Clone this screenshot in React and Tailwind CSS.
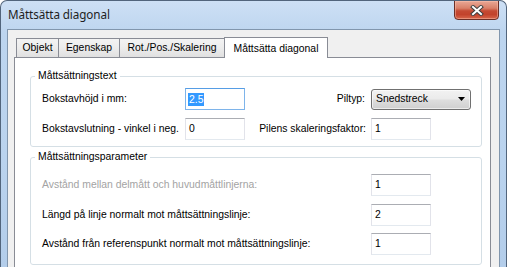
import React from "react";

function Box({ children, focused, w = "w-[60px]" }) {
  return (
    <div
      className={
        w +
        " h-[22px] bg-white flex items-center pl-[2px] border " +
        (focused
          ? "border-[#7eb4ea] border-t-[#569de5]"
          : "border-[#e2e3ea] border-t-[#abadb3] border-b-[#e3e9ef]")
      }
    >
      {children}
    </div>
  );
}

function Select() {
  return (
    <div className="w-[100px] h-[21px] rounded-[3px] border border-[#707070] bg-[linear-gradient(#f2f2f2,#ebebeb_45%,#dddddd_55%,#cfcfcf)] flex items-center pl-[4px] pr-[5px] shadow-[inset_0_0_0_1px_rgba(255,255,255,0.6)]">
      <span className="flex-1 text-black">Snedstreck</span>
      <svg width="7" height="4" viewBox="0 0 7 4">
        <path d="M0 0 H7 L3.5 4 Z" fill="#000" />
      </svg>
    </div>
  );
}

function Group({ title, children, className = "" }) {
  return (
    <fieldset className={"border border-[#d5dfe5] rounded-[3px] " + className}>
      <legend className="ml-[4px] px-[3px] leading-[14px] text-black">{title}</legend>
      {children}
    </fieldset>
  );
}

export default function App() {
  return (
    <div className="w-[507px] h-[267px] overflow-hidden relative flex flex-col rounded-t-[7px] border border-b-0 border-[#52657c] bg-[linear-gradient(#cde0f5,#bdd5ef_12%,#bad3ee_60%,#b3cdea)] font-['Liberation_Sans',Arial,sans-serif] text-[10.4px] text-black">
      {/* Title bar */}
      <div className="h-[28px] flex items-center pl-[7px] shrink-0">
        <span className="font-['Noto_Sans',sans-serif] text-[11.7px] text-[#1e1e1e] tracking-[-0.1px]">
          Måttsätta diagonal
        </span>
      </div>
      {/* Close button */}
      <div className="absolute right-[7px] top-[-1px] w-[45px] h-[20px] rounded-b-[4px] border border-[#6b2f27] bg-[linear-gradient(#e9a896,#d98069_40%,#c44a33_55%,#c2432c_75%,#d7674c)] shadow-[inset_0_0_0_1px_rgba(255,200,180,0.45)] flex items-center justify-center">
        <svg width="14" height="11" viewBox="0 0 14 11">
          <path d="M3 2 L11 9 M11 2 L3 9" stroke="#404040" strokeWidth="4" strokeLinecap="square" />
          <path d="M3 2 L11 9 M11 2 L3 9" stroke="#ffffff" strokeWidth="2" strokeLinecap="square" />
        </svg>
      </div>

      {/* Client area */}
      <div className="flex-1 mx-[6px] border border-b-0 border-[#8196ad] bg-[#f0f0f0] flex flex-col pl-[6px] pr-[8px] pt-[7px]">
        {/* Tabs */}
        <div className="flex items-end ml-[2px] h-[20px] shrink-0">
          <div className="w-[43px] h-[19px] border border-b-0 border-[#898c95] bg-[linear-gradient(#f3f3f3,#ececec_50%,#e0e0e0)] flex items-center justify-center">
            Objekt
          </div>
          <div className="w-[62px] h-[19px] -ml-px border border-b-0 border-[#898c95] bg-[linear-gradient(#f3f3f3,#ececec_50%,#e0e0e0)] flex items-center justify-center">
            Egenskap
          </div>
          <div className="w-[106px] h-[19px] -ml-px border border-b-0 border-[#898c95] bg-[linear-gradient(#f3f3f3,#ececec_50%,#e0e0e0)] flex items-center justify-center">
            Rot./Pos./Skalering
          </div>
          <div className="relative z-10 w-[104px] h-[21px] -ml-px -mb-px border border-b-0 border-[#898c95] bg-white flex items-start justify-center pt-[3px]">
            Måttsätta diagonal
          </div>
        </div>

        {/* Panel */}
        <div className="flex-1 border border-b-0 border-[#898c95] bg-white pl-[15px] pr-[8px]">
          <Group title="Måttsättningstext" className="mt-[11px]">
            <div className="pl-[11px] pr-[10px] pt-[5px] pb-[6px] flex flex-col gap-[8px]">
              <div className="flex items-center h-[22px]">
                <span className="w-[143px] whitespace-nowrap">Bokstavhöjd i mm:</span>
                <Box focused>
                  <span className="bg-[#3399ff] text-white leading-[13px] px-[1px]">2.5</span>
                </Box>
                <span className="flex-1 text-right pr-[6px] whitespace-nowrap">Piltyp:</span>
                <div className="w-[100px]">
                  <Select />
                </div>
              </div>
              <div className="flex items-center h-[22px]">
                <span className="w-[143px] whitespace-nowrap">Bokstavslutning - vinkel i neg.</span>
                <Box>
                  <span className="pl-[1px]">0</span>
                </Box>
                <span className="flex-1 text-right pr-[5px] whitespace-nowrap">Pilens skaleringsfaktor:</span>
                <div className="w-[100px]">
                  <Box>
                    <span className="pl-[1px]">1</span>
                  </Box>
                </div>
              </div>
            </div>
          </Group>

          <Group title="Måttsättningsparameter" className="mt-[3px]">
            <div className="pl-[11px] pr-[10px] pt-[10px] pb-[9px] flex flex-col">
              <div className="flex items-center h-[22px]">
                <span className="flex-1 whitespace-nowrap text-[#a3a3a3]">
                  Avstånd mellan delmått och huvudmåttlinjerna:
                </span>
                <div className="w-[100px]">
                  <Box w="w-[60px]">
                    <span className="pl-[1px]">1</span>
                  </Box>
                </div>
              </div>
              <div className="flex items-center h-[22px] mt-[8px]">
                <span className="flex-1 whitespace-nowrap">
                  Längd på linje normalt mot måttsättningslinje:
                </span>
                <div className="w-[100px]">
                  <Box w="w-[60px]">
                    <span className="pl-[1px]">2</span>
                  </Box>
                </div>
              </div>
              <div className="flex items-center h-[22px] mt-[7px]">
                <span className="flex-1 whitespace-nowrap">
                  Avstånd från referenspunkt normalt mot måttsättningslinje:
                </span>
                <div className="w-[100px]">
                  <Box w="w-[60px]">
                    <span className="pl-[1px]">1</span>
                  </Box>
                </div>
              </div>
            </div>
          </Group>
        </div>
      </div>
    </div>
  );
}
